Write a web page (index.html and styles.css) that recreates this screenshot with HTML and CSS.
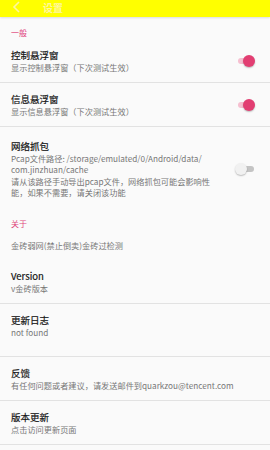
FILE: index.html
```html
<!DOCTYPE html>
<html>
<head>
<meta charset="utf-8">
<link rel="stylesheet" href="styles.css">
</head>
<body>
<header class="bar">
  <svg class="back" width="10" height="12" viewBox="0 0 10 12"><path d="M8 1 L3 6 L8 11" fill="none" stroke="#fff7a0" stroke-width="1.6"/></svg>
  <span class="bar-title">设置</span>
</header>
<main class="list">
  <div class="cat">一般</div>
  <div class="item">
    <div class="text">
      <div class="title">控制悬浮窗</div>
      <div class="sub">显示控制悬浮窗（下次测试生效）</div>
    </div>
    <span class="switch on"><span class="track"></span><span class="thumb"></span></span>
  </div>
  <div class="item">
    <div class="text">
      <div class="title">信息悬浮窗</div>
      <div class="sub">显示信息悬浮窗（下次测试生效）</div>
    </div>
    <span class="switch on"><span class="track"></span><span class="thumb"></span></span>
  </div>
  <div class="item last pcap">
    <div class="text">
      <div class="title">网络抓包</div>
      <div class="sub">Pcap文件路径: /storage/emulated/0/Android/data/<br>com.jinzhuan/cache<br>请从该路径手动导出pcap文件，网络抓包可能会影响性能，如果不需要，请关闭该功能</div>
    </div>
    <span class="switch off"><span class="track"></span><span class="thumb"></span></span>
  </div>
  <div class="cat">关于</div>
  <div class="item last">
    <div class="text"><div class="sub">金砖弱网(禁止倒卖)金砖过检测</div></div>
  </div>
  <div class="item">
    <div class="text">
      <div class="title">Version</div>
      <div class="sub">v金砖版本</div>
    </div>
  </div>
  <div class="item tall">
    <div class="text">
      <div class="title">更新日志</div>
      <div class="sub">not found</div>
    </div>
  </div>
  <div class="item">
    <div class="text">
      <div class="title">反馈</div>
      <div class="sub">有任何问题或者建议，请发送邮件到quarkzou@tencent.com</div>
    </div>
  </div>
  <div class="item">
    <div class="text">
      <div class="title">版本更新</div>
      <div class="sub">点击访问更新页面</div>
    </div>
  </div>
</main>
</body>
</html>
```
FILE: styles.css
```css
* { box-sizing: border-box; }
html, body { margin: 0; padding: 0; }
body {
  width: 270px;
  height: 450px;
  overflow: hidden;
  background: #fafafa;
  font-family: "Noto Sans CJK SC", "Noto Sans", Roboto, sans-serif;
}
.bar {
  height: 17px;
  background: #ffff00;
  display: flex;
  align-items: center;
  gap: 22px;
  padding-left: 11px;
  box-shadow: 0 1px 2px rgba(0,0,0,0.12);
  position: relative;
  z-index: 1;
}
.back { margin-top: -3px; }
.bar-title {
  color: #fff7a0;
  font-size: 10px;
  font-weight: bold;
  line-height: 11px;
  margin-top: -3px;
}
.list { display: flex; flex-direction: column; }
.cat {
  color: #e0457b;
  font-size: 8px;
  line-height: 12px;
  padding: 10px 11px 0;
}
.item {
  display: flex;
  align-items: center;
  padding: 10px 12px 9px 11px;
  border-bottom: 1px solid #e2e2e2;
}
.item.last { border-bottom: none; }
.item.pcap { padding-top: 13px; }
.item.tall { padding-bottom: 18px; }
.text { flex: 1; min-width: 0; padding-right: 10px; }
.title {
  color: #151515;
  font-size: 9.5px;
  line-height: 12.5px;
  -webkit-text-stroke: 0.2px #151515;
}
.sub {
  color: #777;
  font-size: 8.2px;
  line-height: 11.5px;
}
.switch {
  position: relative;
  width: 20px;
  height: 12px;
  flex: none;
  margin-right: 3px;
}
.track {
  position: absolute;
  left: 3px;
  right: 1px;
  top: 3px;
  height: 6px;
  border-radius: 3px;
}
.thumb {
  position: absolute;
  top: 0;
  width: 12px;
  height: 12px;
  border-radius: 50%;
  box-shadow: 0 1px 1.5px rgba(0,0,0,0.25);
}
.on .track { background: #f6bfd0; }
.on .thumb { right: 0; background: #e23e72; }
.off .track { background: #c4c4c4; }
.off .thumb { left: 0; background: #f1f1f1; }
```
